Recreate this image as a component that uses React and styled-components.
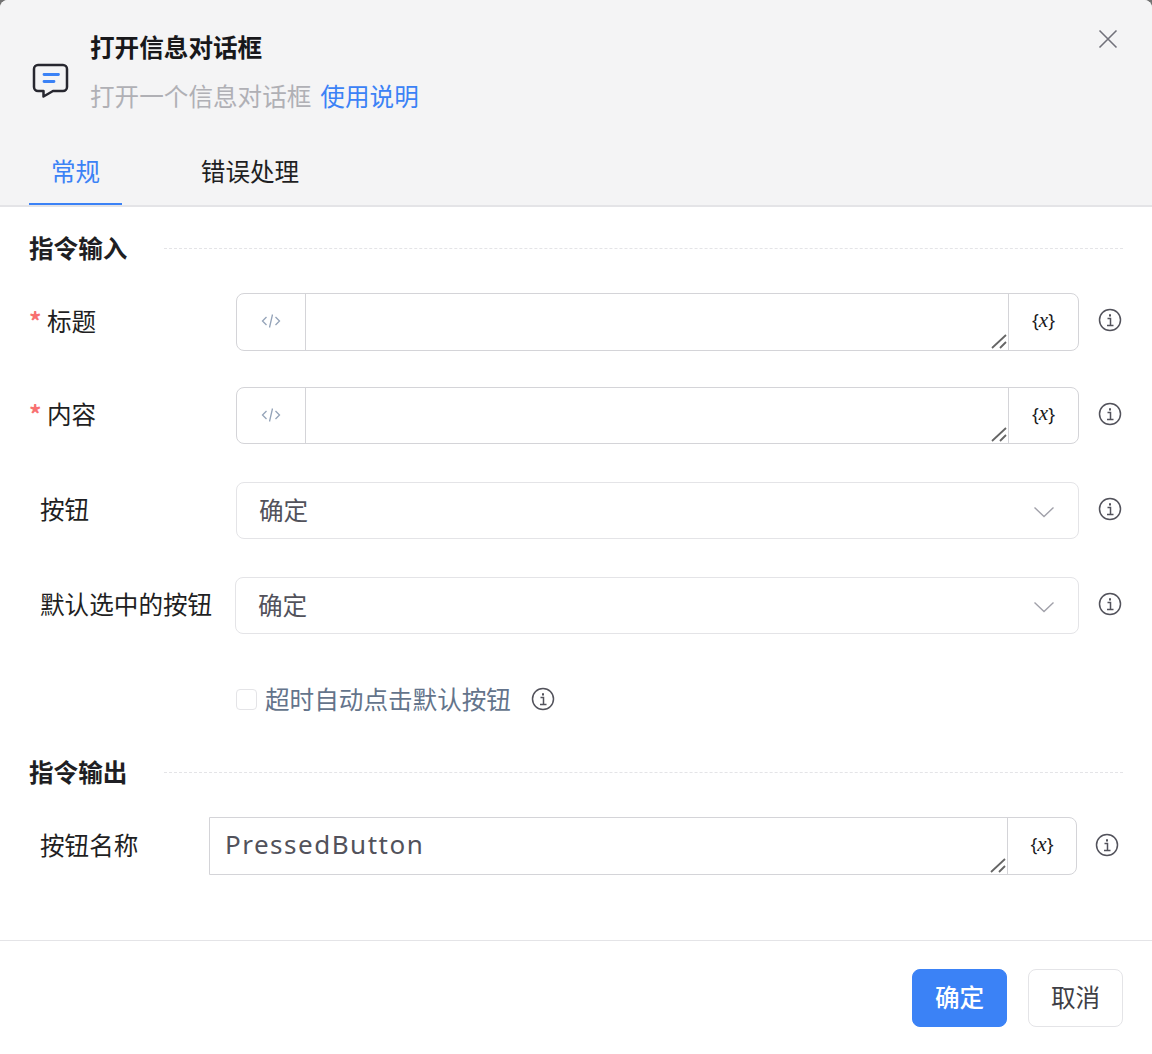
import React from "react";
import styled, { createGlobalStyle } from "styled-components";

const GlobalStyle = createGlobalStyle`
  html, body {
    margin: 0;
    padding: 0;
    background: #737373;
  }
  * {
    box-sizing: border-box;
  }
  body {
    font-family: "Noto Sans CJK SC", "Noto Sans", sans-serif;
  }
`;

const Dialog = styled.div`
  width: 1152px;
  height: 1054px;
  display: flex;
  flex-direction: column;
  background: #fff;
  border-radius: 8px 8px 0 0;
  overflow: hidden;
`;

const Header = styled.div`
  height: 207px;
  background: #f4f4f5;
  border-bottom: 2px solid #e4e4e7;
  display: flex;
  flex-direction: column;
  position: relative;
`;

const HeaderInfo = styled.div`
  display: flex;
  align-items: flex-start;
  gap: 21px;
  padding: 28px 0 0 32px;
`;

const IconBox = styled.div`
  display: flex;
  margin-top: 35px;
`;

const HeaderText = styled.div`
  display: flex;
  flex-direction: column;
  gap: 13px;
`;

const Title = styled.div`
  font-size: 24.6px;
  line-height: 36px;
  font-weight: 700;
  color: #18181b;
`;

const Subtitle = styled.div`
  font-size: 24.6px;
  line-height: 36px;
  color: #b0b0b5;
`;

const HelpLink = styled.a`
  color: #3b82f6;
  margin-left: 9px;
`;

const CloseButton = styled.button`
  position: absolute;
  top: 27px;
  right: 32px;
  width: 24px;
  height: 24px;
  padding: 0;
  border: 0;
  background: transparent;
  color: #71717a;
  display: flex;
`;

const Tabs = styled.div`
  display: flex;
  padding-left: 29px;
  margin-top: auto;
  gap: 53px;
`;

const Tab = styled.div`
  width: ${(p) => p.$width}px;
  height: 68px;
  display: flex;
  align-items: center;
  justify-content: center;
  font-size: 24.6px;
  color: ${(p) => (p.$active ? "#3b82f6" : "#1f1f23")};
  border-bottom: 2px solid ${(p) => (p.$active ? "#3b82f6" : "transparent")};
`;

const Body = styled.div`
  flex: 1;
  padding: 21px 29px 0;
  display: flex;
  flex-direction: column;
`;

const Section = styled.div`
  height: 42px;
  margin-top: ${(p) => p.$top || 0}px;
  display: flex;
  align-items: center;
  gap: 37px;
`;

const SectionTitle = styled.div`
  font-size: 24.6px;
  font-weight: 700;
  color: #1f1f23;
  white-space: nowrap;
  padding-bottom: 4px;
`;

const Dashed = styled.div`
  flex: 1;
  border-top: 1px dashed #e4e4e7;
  margin-bottom: 2px;
`;

const Row = styled.div`
  display: flex;
  align-items: center;
  height: ${(p) => p.$height || 57}px;
  margin-top: ${(p) => p.$top}px;
`;

const Label = styled.div`
  width: ${(p) => p.$width}px;
  flex-shrink: 0;
  padding: 0 0 5px 11px;
  font-size: 24.6px;
  color: #1f1f23;
  white-space: nowrap;
`;

const Star = styled.span`
  display: inline-block;
  width: 18px;
  margin-left: -11px;
  font-weight: 700;
  color: #f87171;
`;

const InputGroup = styled.div`
  flex: 1;
  height: 100%;
  display: flex;
  border: 1px solid #d4d4d8;
  border-radius: ${(p) => (p.$square ? "0 8px 8px 0" : "8px")};
  overflow: hidden;
`;

const CodeAddon = styled.div`
  width: 69px;
  flex-shrink: 0;
  border-right: 1px solid #d4d4d8;
  display: flex;
  align-items: center;
  justify-content: center;
  padding-bottom: 2px;
  color: #94a3b8;
`;

const TextWrap = styled.div`
  flex: 1;
  min-width: 0;
  position: relative;
`;

const TextArea = styled.textarea`
  display: block;
  width: 100%;
  height: 100%;
  margin: 0;
  border: 0;
  outline: 0;
  resize: none;
  padding: 6px 15px;
  font-family: "Noto Sans", sans-serif;
  font-size: 26px;
  line-height: 40px;
  letter-spacing: 1.5px;
  color: #52525b;
  background: #fff;
`;

const Resizer = styled.svg`
  position: absolute;
  right: 1px;
  bottom: 1px;
`;

const VarButton = styled.div`
  width: ${(p) => p.$width ?? 70}px;
  flex-shrink: 0;
  border-left: 1px solid #d4d4d8;
  display: flex;
  align-items: center;
  justify-content: center;
  padding-bottom: 4px;
  color: #18181b;
  font-family: "Noto Sans", sans-serif;
  font-size: 18px;
`;

const VarMark = styled.i`
  font-family: "Liberation Serif", serif;
  font-size: 21px;
`;

const Select = styled.div`
  flex: 1;
  height: 100%;
  display: flex;
  align-items: center;
  justify-content: space-between;
  padding: 0 24px 4px 22px;
  border: 1px solid #e4e4e7;
  border-radius: 8px;
  font-size: 24.6px;
  color: #52525b;
`;

const ChevronBox = styled.span`
  display: flex;
  margin: 6px -1px 0 0;
`;

const InfoSlot = styled.div`
  width: ${(p) => p.$width ?? 44}px;
  flex-shrink: 0;
  display: flex;
  justify-content: flex-end;
  padding: 0 ${(p) => p.$right ?? 1}px ${(p) => p.$bottom ?? 4}px 0;
  color: #52525b;
`;

const CheckRow = styled.div`
  display: flex;
  align-items: center;
  height: 36px;
  margin-top: 47px;
  padding-left: 207px;
`;

const CheckBox = styled.span`
  width: 21px;
  height: 21px;
  border: 1px solid #e4e4e7;
  border-radius: 4px;
  background: #fff;
`;

const CheckLabel = styled.span`
  margin-left: 8px;
  padding-bottom: 2px;
  font-size: 24.6px;
  color: #64748b;
`;

const CheckInfo = styled.span`
  margin-left: 20px;
  display: flex;
  color: #52525b;
`;

const Footer = styled.div`
  height: 114px;
  border-top: 1px solid #e4e4e7;
  display: flex;
  justify-content: flex-end;
  align-items: flex-start;
  gap: 21px;
  padding: 28px 29px 0;
`;

const Button = styled.button`
  width: ${(p) => p.$width}px;
  height: 58px;
  padding: 0 0 4px;
  border-radius: 8px;
  border: 1px solid ${(p) => (p.$primary ? "#3b82f6" : "#e4e4e7")};
  background: ${(p) => (p.$primary ? "#3b82f6" : "#fff")};
  color: ${(p) => (p.$primary ? "#fff" : "#3f3f46")};
  font-family: inherit;
  font-size: 24.6px;
  font-weight: ${(p) => (p.$primary ? 500 : 400)};
`;

const ChatIcon = () => (
  <svg width="37" height="35" viewBox="0 0 37 35" fill="none">
    <path
      d="M6 2h25a4 4 0 0 1 4 4v18a4 4 0 0 1-4 4H21l-9.500 5.500V28H6a4 4 0 0 1-4-4V6a4 4 0 0 1 4-4z"
      stroke="#27272f"
      strokeWidth="2.500"
      strokeLinejoin="round"
    />
    <path d="M12 11.500h14.500M12 18.500h10" stroke="#3b82f6" strokeWidth="2.800" strokeLinecap="round" />
  </svg>
);

const CloseIcon = () => (
  <svg width="24" height="24" viewBox="0 0 24 24" fill="none">
    <path d="M3.500 3.500l17 17M20.500 3.500l-17 17" stroke="currentColor" strokeWidth="1.600" />
  </svg>
);

const CodeIcon = () => (
  <svg width="20" height="16" viewBox="0 0 20 16" fill="none" stroke="currentColor" strokeWidth="1.300">
    <path d="M5.500 4L1.500 8l4 4M14.500 4l4 4-4 4M11.500 1.500l-3 13" />
  </svg>
);

const Chevron = () => (
  <svg width="22" height="12" viewBox="0 0 22 12" fill="none" stroke="#a1a1aa" strokeWidth="1.400">
    <path d="M1.500 1.500L11 10.500l9.500-9" />
  </svg>
);

const InfoIcon = () => (
  <svg width="24" height="24" viewBox="0 0 24 24" fill="none" stroke="currentColor" strokeWidth="1.500">
    <circle cx="12" cy="12" r="10.500" />
    <path d="M9.500 10.500h3V17M9 17.500h6.500" />
    <path d="M12 6.200v2.200" strokeWidth="2" />
  </svg>
);

const ResizeGrip = () => (
  <Resizer width="16" height="16" viewBox="0 0 16 16" fill="none" stroke="#666" strokeWidth="1.800">
    <path d="M1 15L15 2M9 15l6-6" />
  </Resizer>
);

const VarAddon = ({ width }) => (
  <VarButton $width={width}>
    {"{"}
    <VarMark>x</VarMark>
    {"}"}
  </VarButton>
);

const Field = ({ value }) => (
  <TextWrap>
    <TextArea defaultValue={value} />
    <ResizeGrip />
  </TextWrap>
);

const CodeField = () => (
  <InputGroup>
    <CodeAddon>
      <CodeIcon />
    </CodeAddon>
    <Field />
    <VarAddon />
  </InputGroup>
);

const SelectField = () => (
  <Select>
    确定
    <ChevronBox>
      <Chevron />
    </ChevronBox>
  </Select>
);

const Info = ({ width, right, bottom }) => (
  <InfoSlot $width={width} $right={right} $bottom={bottom}>
    <InfoIcon />
  </InfoSlot>
);

export default function App() {
  return (
    <>
      <GlobalStyle />
      <Dialog>
        <Header>
          <HeaderInfo>
            <IconBox>
              <ChatIcon />
            </IconBox>
            <HeaderText>
              <Title>打开信息对话框</Title>
              <Subtitle>
                打开一个信息对话框
                <HelpLink>使用说明</HelpLink>
              </Subtitle>
            </HeaderText>
          </HeaderInfo>
          <CloseButton>
            <CloseIcon />
          </CloseButton>
          <Tabs>
            <Tab $active $width={93}>常规</Tab>
            <Tab $width={150}>错误处理</Tab>
          </Tabs>
        </Header>
        <Body>
          <Section>
            <SectionTitle>指令输入</SectionTitle>
            <Dashed />
          </Section>
          <Row $top={23} $height={58}>
            <Label $width={207}><Star>*</Star>标题</Label>
            <CodeField />
            <Info />
          </Row>
          <Row $top={36}>
            <Label $width={207}><Star>*</Star>内容</Label>
            <CodeField />
            <Info />
          </Row>
          <Row $top={38}>
            <Label $width={207}>按钮</Label>
            <SelectField />
            <Info />
          </Row>
          <Row $top={38}>
            <Label $width={206}>默认选中的按钮</Label>
            <SelectField />
            <Info />
          </Row>
          <CheckRow>
            <CheckBox />
            <CheckLabel>超时自动点击默认按钮</CheckLabel>
            <CheckInfo>
              <InfoIcon />
            </CheckInfo>
          </CheckRow>
          <Section $top={35}>
            <SectionTitle>指令输出</SectionTitle>
            <Dashed />
          </Section>
          <Row $top={23} $height={58}>
            <Label $width={180}>按钮名称</Label>
            <InputGroup $square>
              <Field value="PressedButton" />
              <VarAddon width={69} />
            </InputGroup>
            <Info width={46} right={4} bottom={2} />
          </Row>
        </Body>
        <Footer>
          <Button $primary $width={95}>确定</Button>
          <Button $width={95}>取消</Button>
        </Footer>
      </Dialog>
    </>
  );
}
